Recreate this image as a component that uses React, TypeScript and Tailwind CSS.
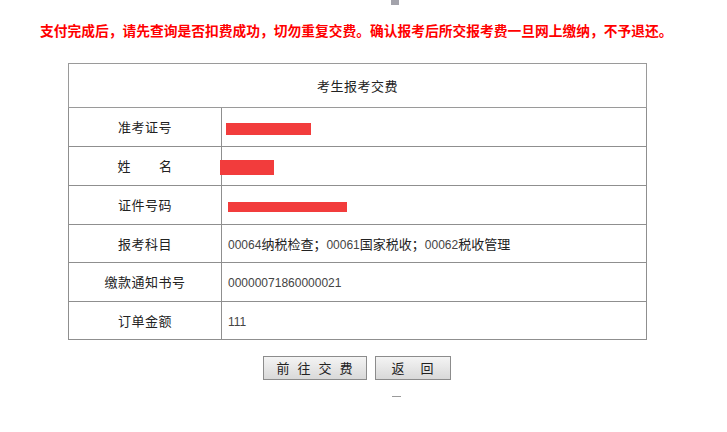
import React from 'react';

const cjk = "font-['SimSun','Noto_Sans_CJK_SC',sans-serif]";

const rows: { label: React.ReactNode; value: React.ReactNode }[] = [
  {
    label: '准考证号',
    value: <span className="ml-[-2px] inline-block h-[12px] w-[85px] bg-[#f23c3c] align-middle" />,
  },
  {
    label: (
      <span className="inline-flex gap-[28px]">
        <span>姓</span>
        <span>名</span>
      </span>
    ),
    value: <span className="ml-[-8px] inline-block h-[15px] w-[54px] bg-[#f23c3c] align-middle" />,
  },
  {
    label: '证件号码',
    value: <span className="inline-block h-[10px] w-[119px] bg-[#f23c3c] align-middle" />,
  },
  {
    label: '报考科目',
    value: (
      <span>
        <Num>00064</Num>纳税检查；<Num>00061</Num>国家税收；<Num>00062</Num>税收管理
      </span>
    ),
  },
  { label: '缴款通知书号', value: <Num>00000071860000021</Num> },
  { label: '订单金额', value: <Num>111</Num> },
];

function Num({ children }: { children: React.ReactNode }) {
  return <span className="font-['Liberation_Sans',sans-serif] text-[12px] text-[#444]">{children}</span>;
}

export default function App() {
  return (
    <div className={`min-h-[432px] w-[727px] bg-white ${cjk} text-[13px] text-[#222]`}>
      <div className="ml-[391px] h-[5px] w-[8px] bg-[#a3a3ab]" />
      <p className="mt-[17px] pl-[40px] text-[13.75px] leading-[16px] font-bold text-[#f00] whitespace-nowrap">
        支付完成后，请先查询是否扣费成功，切勿重复交费。确认报考后所交报考费一旦网上缴纳，不予退还。
      </p>
      <table className="ml-[68px] mt-[25px] w-[579px] border-collapse border border-[#858585]">
        <thead>
          <tr className="h-[44px]">
            <th colSpan={2} className="border border-[#9a9a9a] text-center font-normal tracking-[0.5px]">
              考生报考交费
            </th>
          </tr>
        </thead>
        <tbody>
          {rows.map((r, i) => (
            <tr key={i} className={i === 3 || i === 5 ? 'h-[38px]' : 'h-[39px]'}>
              <td className="w-[153px] border border-[#8f8f8f] text-center tracking-[0.5px]">{r.label}</td>
              <td className="border border-[#8f8f8f] pl-[6px] text-left">{r.value}</td>
            </tr>
          ))}
        </tbody>
      </table>
      <div className="mt-[16px] flex justify-center gap-[8px] pr-[14px]">
        <button className="flex h-[24px] w-[104px] items-center justify-center gap-[8px] whitespace-nowrap border border-[#8c8c8c] bg-gradient-to-b from-[#f4f4f4] to-[#d9d9d9] text-[13px] text-[#222]">
          <span>前</span>
          <span>往</span>
          <span>交</span>
          <span>费</span>
        </button>
        <button className="flex h-[24px] w-[76px] items-center justify-center gap-[16px] whitespace-nowrap border border-[#8c8c8c] bg-gradient-to-b from-[#f4f4f4] to-[#d9d9d9] text-[13px] text-[#222]">
          <span>返</span>
          <span>回</span>
        </button>
      </div>
      <div className="ml-[392px] mt-[16px] h-[1px] w-[9px] bg-[#9a9a9a]" />
    </div>
  );
}
